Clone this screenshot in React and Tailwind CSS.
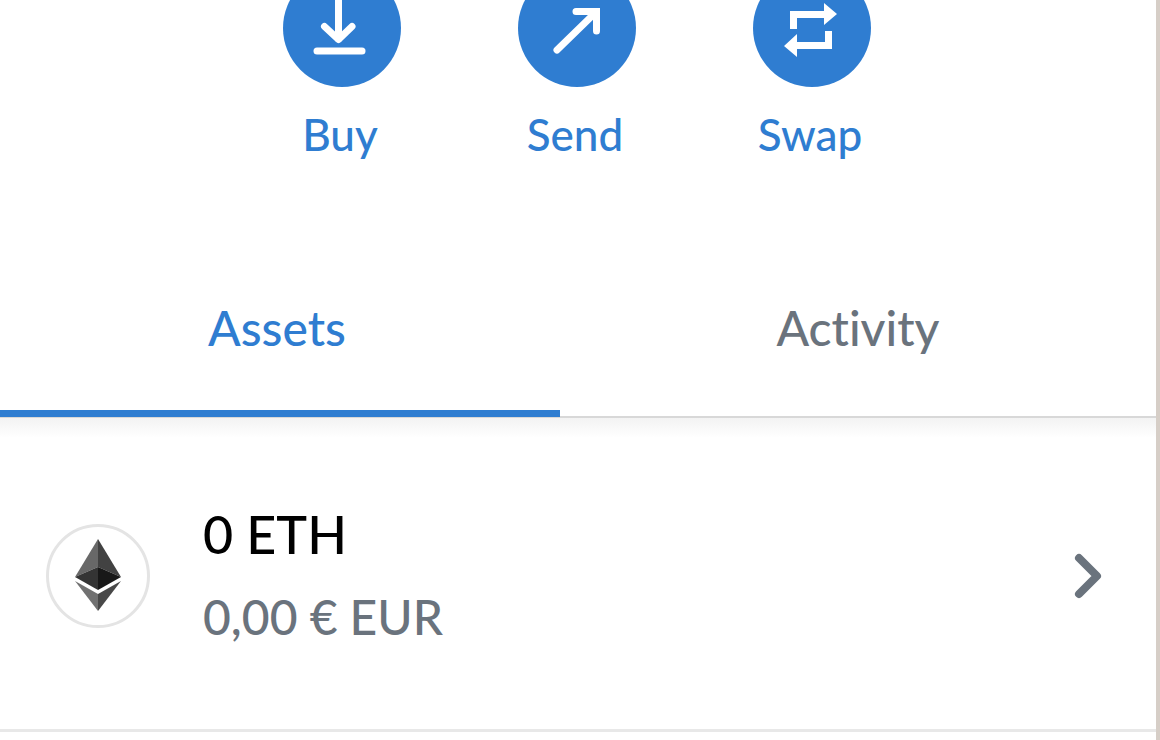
import { useState } from "react";

const actions = [
  {
    label: "Buy",
    icon: (
      <g fill="none" stroke="currentColor" strokeWidth="7" strokeLinecap="round" strokeLinejoin="round">
        <path d="M55.5 22V70" />
        <path d="M41.5 57.5L55.5 70.5L69 57.5" />
        <path d="M34 82H79" />
      </g>
    ),
  },
  {
    label: "Send",
    icon: (
      <g fill="none" stroke="currentColor" strokeWidth="7" strokeLinecap="round">
        <path d="M39 81L77 44" />
        <path d="M58 42.5H78.5V62" />
      </g>
    ),
  },
  {
    label: "Swap",
    icon: (
      <g fill="currentColor">
        <path d="M37 60V42H71V34L84 45L71 56V49H44V60Z" />
        <path d="M72 62H79V80H44V88L31 77L44 65V73H72Z" />
      </g>
    ),
  },
];

const tabs = ["Assets", "Activity"];

function ActionButton({ label, icon }) {
  return (
    <button type="button" className="flex w-[118px] flex-col items-center text-[#2f7dd1]">
      <span className="size-[118px] rounded-full bg-[#2f7dd1] text-white">
        <svg viewBox="0 0 118 118" className="size-full" aria-hidden="true">
          {icon}
        </svg>
      </span>
      <span className="mt-[18px] pr-1 text-[44px] leading-[58px]">{label}</span>
    </button>
  );
}

function EthLogo() {
  return (
    <span className="size-[104px] shrink-0 rounded-full border-3 border-[#e4e4e4] bg-white">
      <svg viewBox="3 3 98 98" className="size-full" aria-hidden="true">
        <path d="M52 15L29 53L52 43Z" fill="#686868" />
        <path d="M52 15L75 53L52 43Z" fill="#424242" />
        <path d="M29 53L52 43V66Z" fill="#343434" />
        <path d="M75 53L52 43V66Z" fill="#181818" />
        <path d="M29 57L52 70V87Z" fill="#717171" />
        <path d="M75 57L52 70V87Z" fill="#484848" />
      </svg>
    </span>
  );
}

export default function App() {
  const [active, setActive] = useState("Assets");

  return (
    <div className="min-h-screen overflow-hidden border-r-4 border-[#d6cec7] bg-white font-['Lato','Liberation_Sans',sans-serif] font-medium [font-variant-ligatures:none]">
      <div className="-mt-[31px] flex justify-center gap-[117px] pr-0.5">
        {actions.map((action) => (
          <ActionButton key={action.label} label={action.label} icon={action.icon} />
        ))}
      </div>

      <div role="tablist" className="mt-[85px] grid grid-cols-[560fr_596fr] border-b-2 border-[#d8d8d8]">
        {tabs.map((tab) => (
          <button
            key={tab}
            type="button"
            role="tab"
            aria-selected={active === tab}
            onClick={() => setActive(tab)}
            className={
              active === tab
                ? "-mb-px border-b-[7px] border-[#2f7dd1] pt-[50px] pr-1.5 pb-[52px] text-[48px] leading-[60px] text-[#2f7dd1]"
                : "-mb-px border-b-[7px] border-transparent pt-[50px] pb-[52px] text-[48px] leading-[60px] text-[#6a737d]"
            }
          >
            {tab}
          </button>
        ))}
      </div>

      <button
        type="button"
        className="flex w-full items-center border-b-3 border-[#e8e8e8] bg-linear-to-b from-[#f3f3f3] to-white to-[20px] pt-[87px] pr-[54px] pb-[82px] pl-[46px] text-left"
      >
        <EthLogo />
        <span className="ml-[53px] flex-1">
          <span className="block text-[52px] leading-[58px] text-black">0 ETH</span>
          <span className="block pt-6 text-[48px] leading-[60px] text-[#6a737d]">0,00 € EUR</span>
        </span>
        <svg viewBox="0 0 28 46" className="h-[46px] w-7 text-[#6a737d]" aria-hidden="true">
          <path
            d="M5 5L23 23L5 41"
            fill="none"
            stroke="currentColor"
            strokeWidth="8"
            strokeLinecap="round"
            strokeLinejoin="round"
          />
        </svg>
      </button>
    </div>
  );
}
